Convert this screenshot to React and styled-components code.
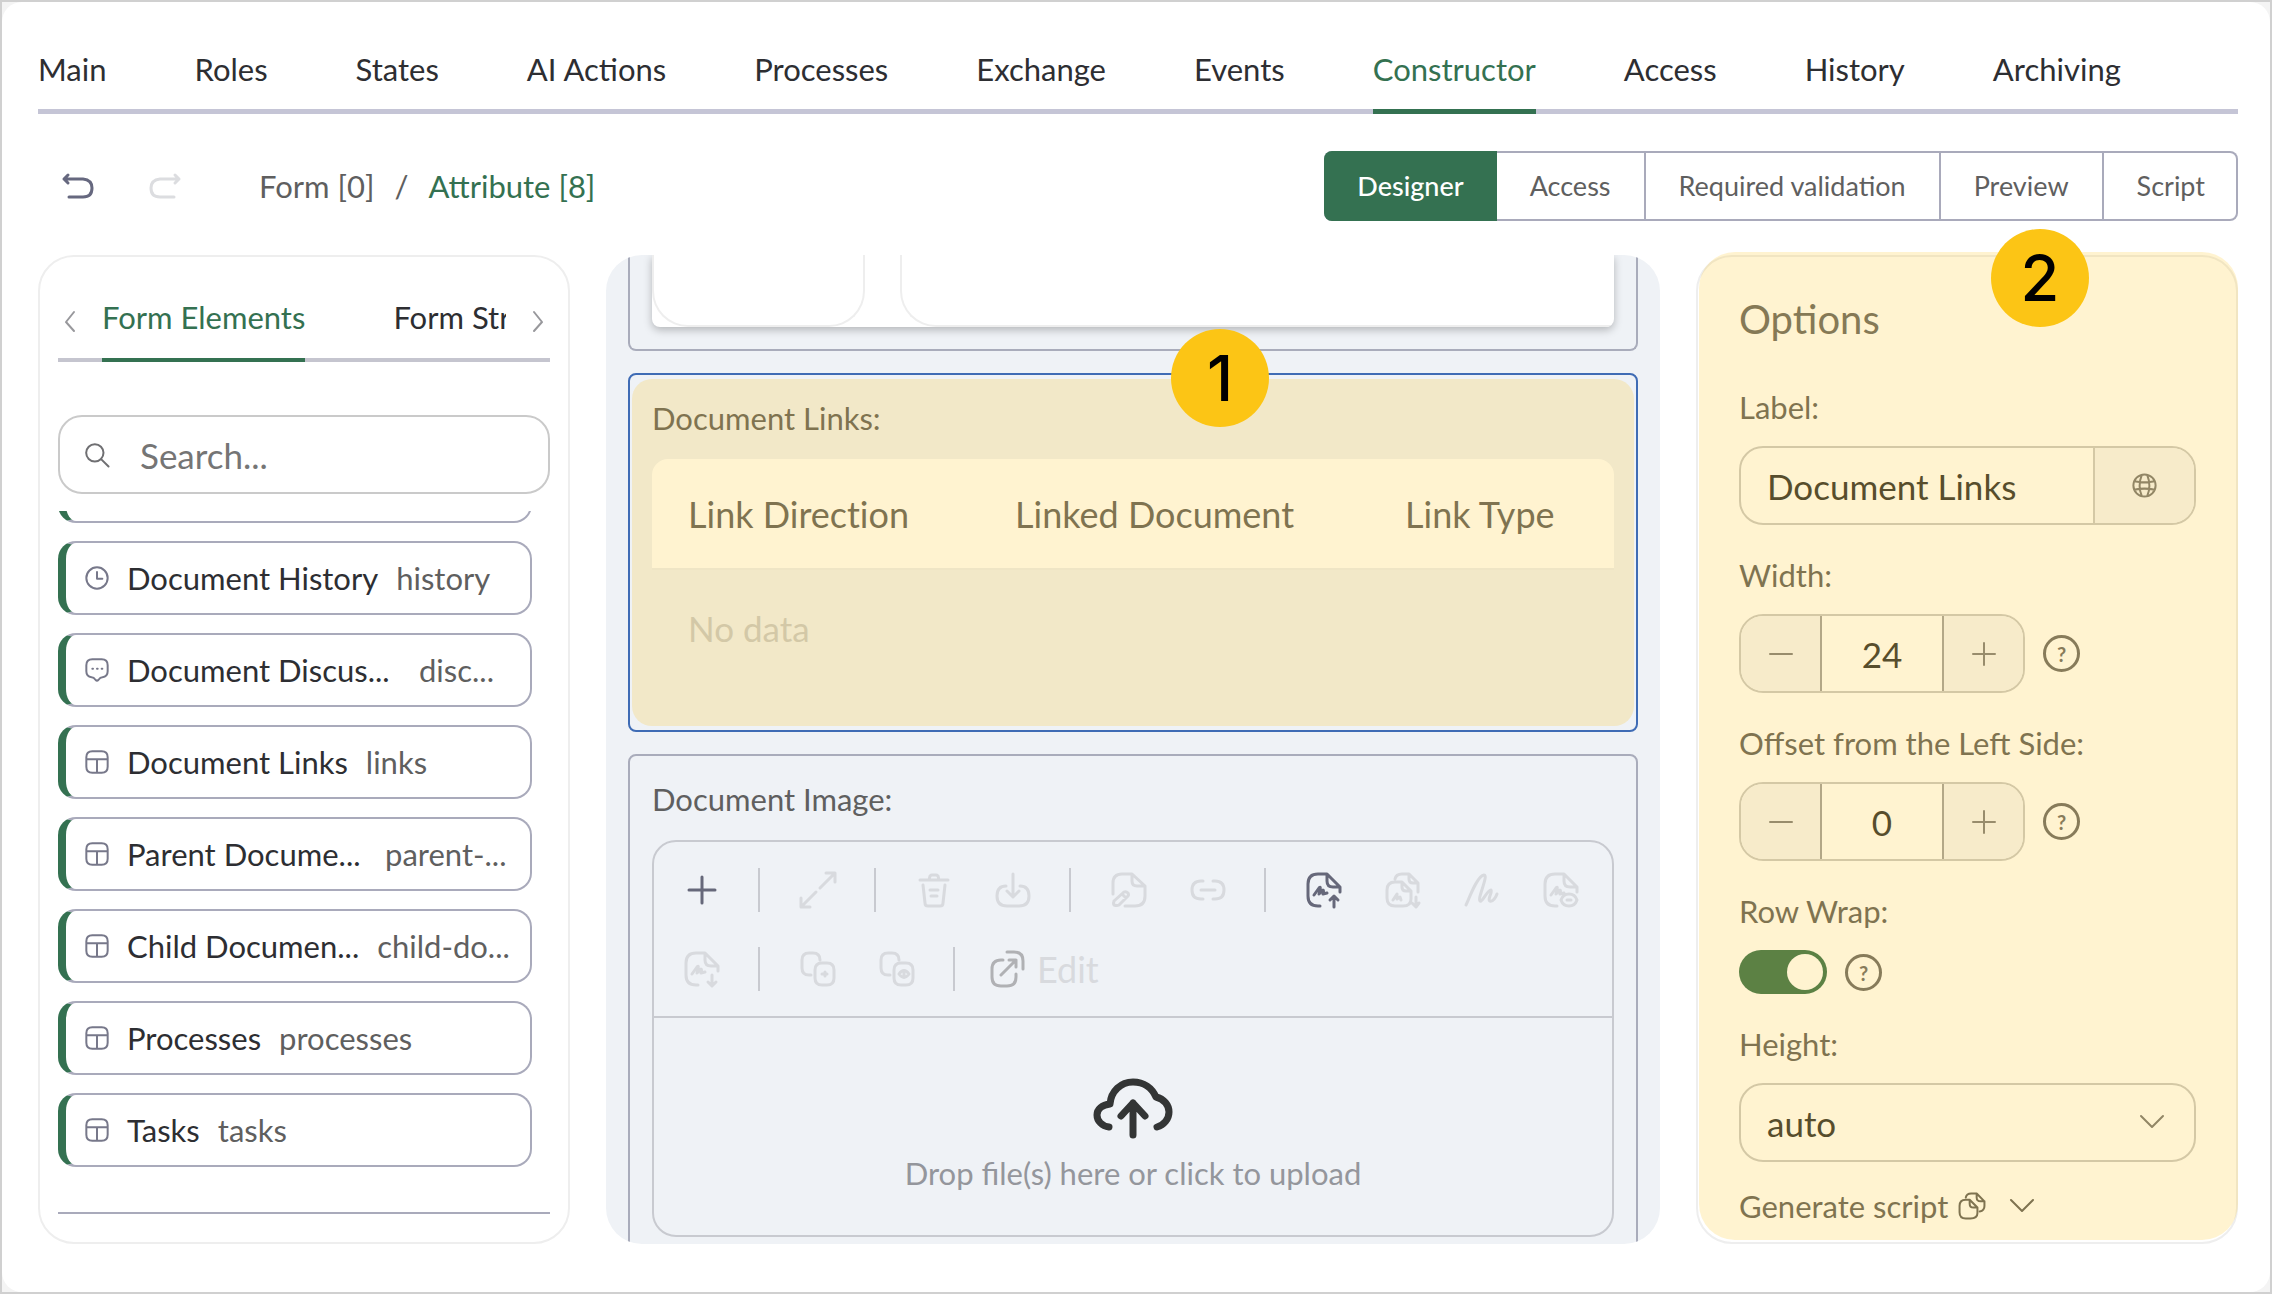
import React from 'react'
import styled, { createGlobalStyle } from 'styled-components'

const tabs = [
  'Main',
  'Roles',
  'States',
  'AI Actions',
  'Processes',
  'Exchange',
  'Events',
  'Constructor',
  'Access',
  'History',
  'Archiving',
]

const modes = ['Designer', 'Access', 'Required validation', 'Preview', 'Script']

const elements = [
  { icon: 'clock', name: 'Document History', code: 'history' },
  { icon: 'chat', name: 'Document Discus...', code: 'disc...', width: 274 },
  { icon: 'table', name: 'Document Links', code: 'links' },
  { icon: 'table', name: 'Parent Docume...', code: 'parent-...', width: 240 },
  { icon: 'table', name: 'Child Documen...', code: 'child-do...' },
  { icon: 'table', name: 'Processes', code: 'processes' },
  { icon: 'table', name: 'Tasks', code: 'tasks' },
]

const tools = [
  { icon: 'plus', label: 'Add', active: true },
  { divider: true },
  { icon: 'expand', label: 'Expand' },
  { divider: true },
  { icon: 'trash', label: 'Delete' },
  { icon: 'download', label: 'Download' },
  { divider: true },
  { icon: 'fileEdit', label: 'Edit file' },
  { icon: 'link', label: 'Link' },
  { divider: true },
  { icon: 'signUp', label: 'Upload signature', active: true },
  { icon: 'signAll', label: 'Download all signatures' },
  { icon: 'scribble', label: 'Sign' },
  { icon: 'signView', label: 'View signature' },
  { icon: 'signDown', label: 'Download signature' },
  { divider: true },
  { icon: 'copyAdd', label: 'Add version' },
  { icon: 'copyView', label: 'View versions' },
  { divider: true },
]

const sheet = 'M14 34H12Q2 34 2 24V12Q2 2 12 2H21L34 15V20M21 2V9Q21 15 27 15H34'
const sign = 'M8 23L13 16Q15 14 14 18L13 22L17 18Q18 18 17 22L21 21'

const paths = {
  plus: 'M18 5V31M5 18H31',
  expand: 'M20 16L35 1M26 1H35V10M16 20L1 35M1 26V35H10',
  trash:
    'M4 8H32M13 8L14 4Q15 3 16 3H20Q21 3 22 4L23 8M7 13L9 31Q9 34 12 34H24Q27 34 27 31L29 13M14 18H22M15 24H21',
  download: 'M11 14Q2 14 2 24Q2 34 12 34H24Q34 34 34 24Q34 14 25 14M18 2V25M12 19L18 25L24 19',
  fileEdit:
    'M2 22V11Q2 2 11 2H21L34 14V24Q34 34 24 34H14M21 2V9Q21 14 26 14H34M3 29L13 20Q15 19 17 21Q18 23 17 24L8 33Q6 34 3 33Q2 32 3 29M11 22L15 26',
  link: 'M13 9H11Q2 9 2 18Q2 27 11 27H13M23 9H25Q34 9 34 18Q34 27 25 27H23M11 18H25',
  signUp: `${sheet}${sign}M28 35V25M24 28L28 24L32 28`,
  signDown: `${sheet}${sign}M28 24V34M24 31L28 35L32 31`,
  signAll:
    'M10 7Q11 2 17 2H24L33 11V20M24 2V7Q24 11 28 11H33M17 10H10Q2 10 2 18V26Q2 34 10 34H18Q26 34 26 27V19L17 10ZM17 10V15Q17 19 21 19H26M8 28L12 22L12 27L15 25L16 28M31 25V34M27 31L31 35L34 31',
  scribble: 'M2 33C5 27 13 4 20 3C25 3 13 27 16 29C18 31 24 17 27 18C29 19 23 28 26 29C29 30 32 25 33 22',
  signView: `${sheet}${sign}M18 28Q20 22 26 22Q32 22 34 28Q32 34 26 34Q20 34 18 28M24 28H28`,
  copyAdd:
    'M11 24H9Q2 24 2 17V9Q2 2 9 2H13Q20 2 20 9M22 12H27Q34 12 34 19V27Q34 34 27 34H22Q15 34 15 27V19Q15 12 22 12ZM22 23H27M25 21V25',
  copyView:
    'M11 24H9Q2 24 2 17V9Q2 2 9 2H13Q20 2 20 9M22 12H27Q34 12 34 19V27Q34 34 27 34H22Q15 34 15 27V19Q15 12 22 12ZM20 23Q25 16 30 23Q25 30 20 23M25 22V24',
  open: 'M14 9H12Q3 9 3 18V26Q3 35 12 35H18Q27 35 27 26V23M12 24L27 9M20 9H27V16M18 1H25Q34 1 34 10V18',
  undo: 'M8 7L4 11L8 15M4 11H23Q32 12 32 20Q32 29 23 29H9',
  redo: 'M28 7L32 11L28 15M32 11H13Q4 12 4 20Q4 29 13 29H27',
  left: 'M16 9L8 19L16 28',
  right: 'M20 9L28 19L20 28',
  down: 'M7 12L18 23L29 12',
  minus: 'M7 18H29',
  add: 'M18 7V29M7 18H29',
  search: 'M15 3A12 12 0 1 0 15 27A12 12 0 1 0 15 3M24 24L34 34',
  clock: 'M18 2A16 16 0 1 0 18 34A16 16 0 1 0 18 2M18 9V19H26',
  chat: 'M11 2H25Q34 2 34 11V20Q34 28 26 29Q23 29 20 33Q18 35 16 33Q13 29 10 29Q2 28 2 20V11Q2 2 11 2M11 16H12M18 16H19M25 16H26',
  table: 'M11 2H25Q34 2 34 11V25Q34 34 25 34H11Q2 34 2 25V11Q2 2 11 2M2 14H34M18 14V34',
  globe:
    'M18 2A16 16 0 1 0 18 34A16 16 0 1 0 18 2M14 3Q8 18 14 33M22 3Q28 18 22 33M3 12Q18 15 33 12M3 24Q18 21 33 24',
  copy: 'M10 7Q11 2 17 2H24L34 12V18Q34 24 28 25M24 2V7Q24 12 29 12H34M15 10H10Q2 10 2 18V26Q2 34 10 34H16Q25 34 25 27V20L15 10M15 10V15Q15 20 20 20H25',
}

const Icon = ({ name, size = 36, weight = 2 }) => (
  <svg
    width={size}
    height={size}
    viewBox='0 0 36 36'
    fill='none'
    stroke='currentColor'
    strokeWidth={(weight * 36) / size}
    strokeLinecap='round'
    strokeLinejoin='round'
    overflow='visible'
    aria-hidden='true'>
    <path d={paths[name]} />
  </svg>
)

const Stepper = ({ id, label, value }) => (
  <Field>
    <Label htmlFor={id}>{label}</Label>
    <Inline>
      <StepBox>
        <StepButton aria-label='Decrease'>
          <Icon name='minus' />
        </StepButton>
        <StepInput id={id} defaultValue={value} />
        <StepButton aria-label='Increase'>
          <Icon name='add' />
        </StepButton>
      </StepBox>
      <Help aria-label={`About ${label}`}>?</Help>
    </Inline>
  </Field>
)

const App = () => {
  const [tab, setTab] = React.useState('Constructor')
  const [mode, setMode] = React.useState('Designer')

  return (
    <>
      <GlobalStyle />
      <Frame>
        <Page>
          <Nav>
            {tabs.map((el) => (
              <NavLink
                key={el}
                href='#'
                $active={el === tab}
                onClick={() => setTab(el)}>
                {el}
              </NavLink>
            ))}
          </Nav>

          <Toolbar>
            <HistoryButton aria-label='Undo'>
              <Icon name='undo' weight={3} />
            </HistoryButton>
            <HistoryButton aria-label='Redo' disabled>
              <Icon name='redo' weight={3} />
            </HistoryButton>
            <Crumbs>
              <Crumb href='#'>Form [0]</Crumb>
              <span>/</span>
              <Crumb href='#' $active>
                Attribute [8]
              </Crumb>
            </Crumbs>
            <Segments>
              {modes.map((el) => (
                <Segment
                  key={el}
                  $active={el === mode}
                  onClick={() => setMode(el)}>
                  {el}
                </Segment>
              ))}
            </Segments>
          </Toolbar>

          <Columns>
            <Sidebar>
              <Strip>
                <Arrow aria-label='Previous tabs'>
                  <Icon name='left' />
                </Arrow>
                <StripTabs>
                  <StripTab $active>Form Elements</StripTab>
                  <StripTab>Form Structure</StripTab>
                </StripTabs>
                <Arrow aria-label='Next tabs' $end>
                  <Icon name='right' />
                </Arrow>
              </Strip>
              <SearchBox>
                <Icon name='search' size={26} />
                <SearchInput placeholder='Search...' aria-label='Search' />
              </SearchBox>
              <List>
                <Item />
                {elements.map((el) => (
                  <Item key={el.name}>
                    <ItemIcon>
                      <Icon name={el.icon} size={24} />
                    </ItemIcon>
                    <ItemName $width={el.width}>{el.name}</ItemName>
                    <ItemCode>{el.code}</ItemCode>
                  </Item>
                ))}
              </List>
              <Rule />
            </Sidebar>

            <Canvas>
              <FirstCard>
                <Preview>
                  <PreviewSide />
                  <PreviewMain />
                </Preview>
              </FirstCard>

              <Card $selected>
                <Label as='h3'>Document Links:</Label>
                <Table>
                  <thead>
                    <tr>
                      <Head $width='34%'>Link Direction</Head>
                      <Head $width='390px'>Linked Document</Head>
                      <Head>Link Type</Head>
                    </tr>
                  </thead>
                  <tbody>
                    <tr>
                      <Empty colSpan={3}>No data</Empty>
                    </tr>
                  </tbody>
                </Table>
                <CardHighlight />
                <CardBadge>1</CardBadge>
              </Card>

              <Card>
                <Label as='h3'>Document Image:</Label>
                <Uploader>
                  <Tools>
                    {tools.map((el, i) =>
                      el.divider ? (
                        <Divider key={i} />
                      ) : (
                        <Tool
                          key={i}
                          aria-label={el.label}
                          disabled={!el.active}>
                          <Icon name={el.icon} weight={3} />
                        </Tool>
                      )
                    )}
                    <EditTool disabled>
                      <Icon name='open' weight={3} />
                      <span>Edit</span>
                    </EditTool>
                  </Tools>
                  <DropZone>
                    <Cloud />
                    Drop file(s) here or click to upload
                  </DropZone>
                </Uploader>
              </Card>
            </Canvas>

            <Options>
              <Title>Options</Title>
              <Field>
                <Label htmlFor='label'>Label:</Label>
                <InputBox>
                  <TextInput id='label' defaultValue='Document Links' />
                  <Translate aria-label='Translations'>
                    <Icon name='globe' size={25} />
                  </Translate>
                </InputBox>
              </Field>
              <Stepper id='width' label='Width:' value='24' />
              <Stepper
                id='offset'
                label='Offset from the Left Side:'
                value='0'
              />
              <Field>
                <Label htmlFor='wrap'>Row Wrap:</Label>
                <Inline>
                  <Toggle id='wrap' type='checkbox' defaultChecked />
                  <Help aria-label='About Row Wrap'>?</Help>
                </Inline>
              </Field>
              <Field>
                <Label htmlFor='height'>Height:</Label>
                <InputBox>
                  <Select id='height'>
                    <option>auto</option>
                  </Select>
                  <SelectArrow>
                    <Icon name='down' />
                  </SelectArrow>
                </InputBox>
              </Field>
              <Generate>
                Generate script
                <Icon name='copy' size={28} />
                <Icon name='down' />
              </Generate>
              <PanelHighlight />
              <PanelBadge>2</PanelBadge>
            </Options>
          </Columns>
        </Page>
      </Frame>
    </>
  )
}

export default App

const Cloud = () => (
  <svg
    width='80'
    height='64'
    viewBox='0 0 80 64'
    fill='none'
    stroke='#333535'
    strokeWidth='7'
    strokeLinecap='round'
    strokeLinejoin='round'
    aria-hidden='true'>
    <path d='M16 51C9 50 4 45 4 39C4 33 9 29 17 28C18 15 28 6 40 6C51 6 59 12 63 21C71 23 76 29 76 36C76 43 71 49 64 51' />
    <path d='M40 59V27M28 40L40 27L52 40' />
  </svg>
)

const GlobalStyle = createGlobalStyle`
  * {
    box-sizing: border-box;
  }

  body {
    margin: 0;
    color: #5f5f5f;
    background: #f4f4f4;
    font-size: 31px;
    line-height: 36px;
    font-family: Lato, 'Liberation Sans', sans-serif;
  }

  button, input, select {
    margin: 0;
    padding: 0;
    border: none;
    outline: none;
    color: inherit;
    background: none;
    font: inherit;
  }

  a {
    text-decoration: none;
  }
`

const Frame = styled.div`
  height: 100vh;
  border: 2px solid #d0d0d0;
`

const Page = styled.div`
  height: 100%;
  display: flex;
  flex-direction: column;
  padding: 49px 32px 48px 36px;
  border-radius: 20px;
  background: #fff;
`

const Nav = styled.nav`
  display: flex;
  gap: 88px;
  box-shadow: inset 0 -5px #c5c5d6;
`

const NavLink = styled.a`
  padding-bottom: 22px;
  white-space: nowrap;
  color: ${({ $active }) => ($active ? '#347151' : '#2d2e32')};
  border-bottom: 5px solid
    ${({ $active }) => ($active ? '#347151' : 'transparent')};
`

const Toolbar = styled.div`
  display: flex;
  align-items: center;
  margin: 37px 0 34px;
  padding-left: 16px;
`

const HistoryButton = styled.button`
  width: 48px;
  height: 48px;
  display: flex;
  align-items: center;
  justify-content: center;
  margin-right: 39px;
  color: #66687f;

  &:disabled {
    color: #dcdde0;
  }
`

const Crumbs = styled.div`
  flex: 1;
  display: flex;
  gap: 20px;
  margin-left: 31px;
`

const Crumb = styled.a`
  color: ${({ $active }) => ($active ? '#347151' : '#5f5f5f')};
`

const Segments = styled.div`
  display: flex;
  border-radius: 8px;
  overflow: hidden;
  box-shadow: inset 0 0 0 2px #a9aabb;
`

const Segment = styled.button`
  height: 70px;
  padding: 0 33px;
  font-size: 27px;
  color: ${({ $active }) => ($active ? '#fff' : '#5f5f5f')};
  font-weight: ${({ $active }) => ($active ? 500 : 400)};
  background: ${({ $active }) => ($active ? '#347151' : 'none')};

  & + & {
    border-right: 2px solid #a9aabb;
  }

  &:last-child {
    border-right: none;
  }
`

const Columns = styled.main`
  flex: 1;
  min-height: 0;
  display: grid;
  gap: 36px;
  grid-template-columns: 266fr 527fr 271fr;
`

const Sidebar = styled.aside`
  min-width: 0;
  min-height: 0;
  display: flex;
  flex-direction: column;
  padding: 42px 18px 28px;
  border: 2px solid #eee;
  border-radius: 36px;
`

const Strip = styled.div`
  display: flex;
  box-shadow: inset 0 -4px #c5c5cf;
`

const StripTabs = styled.div`
  flex: 1;
  display: flex;
  gap: 88px;
  overflow: hidden;
`

const StripTab = styled.button`
  padding-bottom: 23px;
  white-space: nowrap;
  color: ${({ $active }) => ($active ? '#347151' : '#2d2e32')};
  border-bottom: 4px solid
    ${({ $active }) => ($active ? '#347151' : 'transparent')};
`

const Arrow = styled.button`
  width: 44px;
  height: 44px;
  display: flex;
  align-items: center;
  justify-content: ${({ $end }) => ($end ? 'flex-end' : 'flex-start')};
  color: #98989c;
`

const SearchBox = styled.div`
  height: 79px;
  flex-shrink: 0;
  display: flex;
  align-items: center;
  gap: 30px;
  margin-top: 53px;
  padding-left: 24px;
  color: #6f6f72;
  border: 2px solid #cacaca;
  border-radius: 24px;
`

const SearchInput = styled.input`
  flex: 1;
  min-width: 0;
  height: 100%;
  font-size: 35px;

  &::placeholder {
    color: #757575;
  }
`

const List = styled.div`
  flex: 1;
  min-height: 0;
  display: flex;
  flex-direction: column;
  justify-content: flex-end;
  gap: 18px;
  margin-top: 17px;
  padding: 0 18px 45px 0;
  overflow: hidden;
`

const Item = styled.div`
  height: 74px;
  flex-shrink: 0;
  display: flex;
  align-items: center;
  padding-left: 19px;
  white-space: nowrap;
  border: 2px solid #a9aabb;
  border-left: 8px solid #347151;
  border-radius: 18px;
`

const ItemIcon = styled.span`
  display: flex;
  margin-right: 18px;
  color: #77788a;
`

const ItemName = styled.span`
  margin-right: 18px;
  min-width: ${({ $width }) => ($width ? `${$width}px` : 'auto')};
  color: #2d2e32;
`

const ItemCode = styled.span`
  color: #5f5f5f;
`

const Rule = styled.hr`
  width: 100%;
  margin: 0;
  border: none;
  border-top: 2px solid #a9aabb;
`

const Canvas = styled.section`
  min-width: 0;
  min-height: 0;
  display: flex;
  flex-direction: column;
  gap: 22px;
  padding: 0 22px;
  overflow: hidden;
  border-radius: 36px;
  background: #eff2f6;
`

const Card = styled.article`
  position: relative;
  flex-shrink: 0;
  padding: 25px 22px 44px;
  border: 2px solid ${({ $selected }) => ($selected ? '#3f6cb5' : '#a9acbb')};
  border-radius: 8px;
`

const FirstCard = styled(Card)`
  padding: 0 22px 22px;
  border-top: none;
  border-radius: 0 0 8px 8px;
`

const Preview = styled.div`
  height: 72px;
  display: flex;
  gap: 35px;
  overflow: hidden;
  background: #fff;
  border-radius: 0 0 8px 8px;
  box-shadow: 0 3px 8px rgba(0, 0, 0, 0.25);
`

const PreviewSide = styled.div`
  flex: 22;
  border: 2px solid #eee;
  border-top: none;
  border-radius: 0 0 36px 36px;
`

const PreviewMain = styled.div`
  flex: 75;
  border: 2px solid #eee;
  border-width: 0 0 2px 2px;
  border-radius: 0 0 0 36px;
`

const Label = styled.label`
  display: block;
  margin: 0;
  font-size: 31px;
  font-weight: 400;
  line-height: 36px;
  color: #5f5f5f;
`

const Table = styled.table`
  width: 100%;
  margin-top: 23px;
  table-layout: fixed;
  border-spacing: 0;
  font-size: 35px;
  text-align: left;
`

const Head = styled.th`
  width: ${({ $width }) => $width};
  height: 111px;
  padding: 0 0 0 36px;
  font-size: 36px;
  font-weight: 400;
  font-variant-ligatures: none;
  background: #fff;
  border-bottom: 2px solid #eceef2;

  &:first-child {
    border-top-left-radius: 16px;
  }

  &:last-child {
    border-top-right-radius: 16px;
  }
`

const Empty = styled.td`
  height: 116px;
  padding: 0 0 0 36px;
  color: #c9cacc;
`

const Highlight = styled.div`
  position: absolute;
  pointer-events: none;
  background: rgba(255, 197, 20, 0.2);
`

const CardHighlight = styled(Highlight)`
  inset: 4px 2px;
  border-radius: 20px;
`

const PanelHighlight = styled(Highlight)`
  inset: -5px -2px 2px 1px;
  border-radius: 36px;
`

const Badge = styled.span`
  position: absolute;
  width: 98px;
  height: 98px;
  display: flex;
  align-items: center;
  justify-content: center;
  color: #000;
  background: #fcc515;
  border-radius: 50%;
  font-size: 63px;
  font-weight: 500;
  font-family: Inter, 'Liberation Sans', sans-serif;
`

const CardBadge = styled(Badge)`
  top: -46px;
  left: calc(50% + 38px);
`

const PanelBadge = styled(Badge)`
  top: -28px;
  right: 147px;
`

const Uploader = styled.div`
  margin-top: 23px;
  border: 2px solid #c8cad0;
  border-radius: 24px;
`

const Tools = styled.div`
  display: flex;
  flex-wrap: wrap;
  align-items: center;
  padding: 8px;
  border-bottom: 2px solid #c8cad0;
`

const Tool = styled.button`
  width: 79px;
  height: 79px;
  display: flex;
  align-items: center;
  justify-content: center;
  color: #66687a;

  &:disabled {
    color: #d8dade;
  }
`

const EditTool = styled(Tool)`
  width: auto;
  gap: 12px;
  padding-left: 16px;
  font-size: 36px;

  &:disabled svg {
    color: #b0b1b4;
  }
`

const Divider = styled.span`
  width: 2px;
  height: 44px;
  margin: 0 18px 0 17px;
  background: #c8cad0;
`

const DropZone = styled.div`
  display: flex;
  flex-direction: column;
  align-items: center;
  gap: 15px;
  padding: 58px 0 44px;
  color: #94969c;
`

const Options = styled.aside`
  position: relative;
  min-width: 0;
  padding: 38px 40px 0 41px;
  border: 2px solid #eee;
  border-radius: 36px;
`

const Title = styled.h2`
  margin: 0 0 46px;
  font-size: 40px;
  font-weight: 400;
  line-height: 48px;
  color: #676767;
`

const Field = styled.div`
  margin-bottom: 32px;
`

const Inline = styled.div`
  display: flex;
  align-items: center;
  gap: 18px;
  margin-top: 21px;
`

const InputBox = styled.div`
  position: relative;
  height: 79px;
  display: flex;
  margin-top: 21px;
  overflow: hidden;
  font-size: 35px;
  color: #2d3033;
  border: 2px solid #cacaca;
  border-radius: 24px;
`

const TextInput = styled.input`
  flex: 1;
  min-width: 0;
  padding-left: 26px;
`

const Translate = styled.button`
  width: 101px;
  display: flex;
  align-items: center;
  justify-content: center;
  color: #77777a;
  background: #f5f6f8;
  border-left: 2px solid #cacaca;
`

const StepBox = styled.div`
  width: 286px;
  height: 79px;
  display: flex;
  overflow: hidden;
  border: 2px solid #cacaca;
  border-radius: 24px;
`

const StepButton = styled.button`
  width: 79px;
  display: flex;
  align-items: center;
  justify-content: center;
  color: #7f7f82;
  background: #f5f6f8;
`

const StepInput = styled.input`
  flex: 1;
  min-width: 0;
  font-size: 35px;
  text-align: center;
  color: #2d3033;
  border: 2px solid #a0a0a4;
  border-width: 0 2px;
`

const Help = styled.button`
  width: 37px;
  height: 37px;
  font-size: 20px;
  font-weight: 700;
  line-height: 32px;
  color: #6a6a6c;
  border: 3px solid #6a6a6c;
  border-radius: 50%;
`

const Toggle = styled.input`
  appearance: none;
  width: 88px;
  height: 44px;
  padding: 4px;
  border-radius: 22px;
  background: #c8cad0;

  &::after {
    content: '';
    display: block;
    width: 36px;
    height: 36px;
    border-radius: 50%;
    background: #fff;
  }

  &:checked {
    background: #347151;
  }

  &:checked::after {
    margin-left: auto;
  }
`

const Select = styled.select`
  flex: 1;
  appearance: none;
  padding-left: 26px;
`

const SelectArrow = styled.span`
  position: absolute;
  top: 19px;
  right: 24px;
  display: flex;
  color: #77777a;
  pointer-events: none;
`

const Generate = styled.button`
  display: flex;
  align-items: center;
  gap: 10px;
  margin-top: -6px;

  svg + svg {
    margin-left: 8px;
  }
`
